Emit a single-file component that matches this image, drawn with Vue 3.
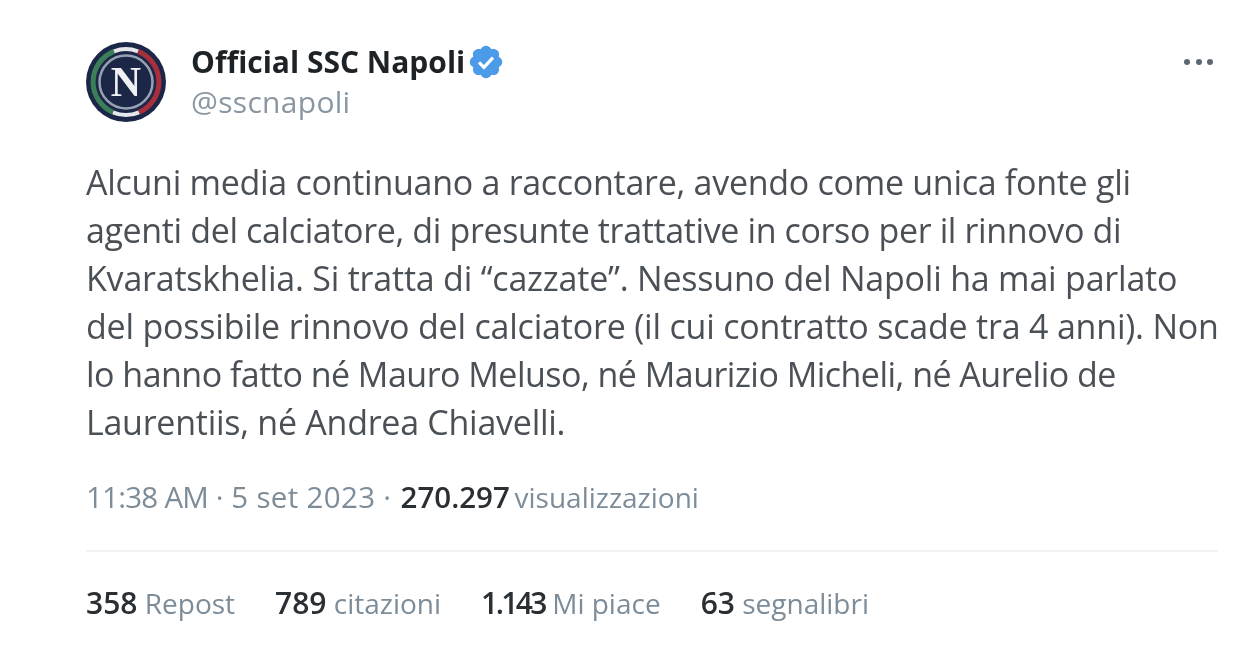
<script setup>
const righe = [
  { testo: 'Alcuni media continuano a raccontare, avendo come unica fonte gli', ls: -0.28 },
  { testo: 'agenti del calciatore, di presunte trattative in corso per il rinnovo di', ls: -0.37 },
  { testo: 'Kvaratskhelia. Si tratta di “cazzate”. Nessuno del Napoli ha mai parlato', ls: -0.21 },
  { testo: 'del possibile rinnovo del calciatore (il cui contratto scade tra 4 anni). Non', ls: -0.2 },
  { testo: 'lo hanno fatto né Mauro Meluso, né Maurizio Micheli, né Aurelio de', ls: -0.52 },
  { testo: 'Laurentiis, né Andrea Chiavelli.', ls: -0.26 }
]

const statistiche = [
  { num: '358', label: 'Repost' },
  { num: '789', label: 'citazioni' },
  { num: '1.143', label: 'Mi piace', stretto: true },
  { num: '63', label: 'segnalibri' }
]
</script>

<template>
  <div class="tweet">
    <header class="testa">
      <svg class="avatar" viewBox="0 0 80 80" width="80" height="80">
        <circle cx="40" cy="40" r="40" fill="#1c2747" />
        <path d="M28 9.3 A33 33 0 0 0 27 70.3" fill="none" stroke="#3a7f58" stroke-width="5" />
        <path d="M52 9.3 A33 33 0 0 1 53 70.3" fill="none" stroke="#a82f3c" stroke-width="5" />
        <path d="M28 9.3 A33 33 0 0 1 52 9.3" fill="none" stroke="#e6e8ec" stroke-width="4" />
        <path d="M27 70.3 A33 33 0 0 0 53 70.3" fill="none" stroke="#e6e8ec" stroke-width="4" />
        <circle cx="40" cy="40" r="26.5" fill="none" stroke="#98a1b2" stroke-width="2.5" />
        <text x="40" y="54" text-anchor="middle" class="logo-n">N</text>
      </svg>
      <div class="nomi">
        <div class="riga-nome">
          <span class="nome">Official SSC Napoli</span>
          <svg class="spunta" viewBox="0 0 24 24" width="38" height="38">
            <path fill="#4c9be8" d="M22.25 12c0-1.43-.88-2.67-2.19-3.34.46-1.39.2-2.9-.81-3.91s-2.52-1.27-3.91-.81c-.66-1.31-1.91-2.19-3.34-2.19s-2.67.88-3.33 2.19c-1.4-.46-2.91-.2-3.92.81s-1.26 2.52-.8 3.91c-1.31.67-2.2 1.91-2.2 3.34s.89 2.67 2.2 3.34c-.46 1.39-.21 2.9.8 3.91s2.52 1.26 3.91.81c.67 1.31 1.91 2.19 3.34 2.19s2.68-.88 3.34-2.19c1.39.45 2.9.2 3.91-.81s1.27-2.52.81-3.91c1.31-.67 2.19-1.91 2.19-3.34z" />
            <path fill="none" stroke="#fff" stroke-width="2" d="M7.6 12.3l3.1 3.1 5.7-6.2" />
          </svg>
        </div>
        <div class="handle">@sscnapoli</div>
      </div>
      <div class="altro">
        <i></i><i></i><i></i>
      </div>
    </header>

    <div class="testo">
      <div
        v-for="riga in righe"
        :key="riga.testo"
        class="riga"
        :style="{ letterSpacing: riga.ls + 'px' }">{{ riga.testo }}</div>
    </div>

    <div class="meta">
      <span class="ora">11:38 AM</span> · <span class="data">5 set 2023</span> · <b>270.297</b> <span class="vis">visualizzazioni</span>
    </div>

    <div class="stats">
      <span v-for="s in statistiche" :key="s.label" class="stat"><b :class="{ stretto: s.stretto }">{{ s.num }}</b> {{ s.label }}</span>
    </div>
  </div>
</template>

<style>
html, body {
  margin: 0;
  background: #fff;
}
</style>

<style scoped>
/* lo screenshot originale e' ingrandito, quindi leggermente sfocato */
.tweet {
  width: 1132px;
  height: 658px;
  box-sizing: border-box;
  margin-left: 86px;
  padding-top: 42px;
  font-family: "Open Sans", "Noto Sans", sans-serif;
  color: #0f1419;
  overflow: hidden;
  filter: blur(0.5px);
}

.testa {
  display: flex;
  height: 80px;
}

.avatar {
  flex: none;
}

.logo-n {
  font-family: "Liberation Serif", serif;
  font-weight: 700;
  font-size: 42px;
  fill: #eef0f4;
}

.nomi {
  margin-left: 25px;
  flex: 1;
}

.riga-nome {
  display: flex;
  align-items: center;
  height: 40px;
}

.nome {
  font-size: 30px;
  line-height: 40px;
  font-weight: 700;
  color: #1d2226;
  white-space: nowrap;
  margin-top: -1px;
}

.spunta {
  margin-left: 2px;
}

.handle {
  font-size: 30px;
  line-height: 40px;
  color: #8a97a3;
  letter-spacing: 0.3px;
}

.altro {
  display: flex;
  gap: 5.5px;
  height: 6px;
  margin-top: 17px;
  margin-right: 5px;
}

.altro i {
  width: 6px;
  height: 6px;
  border-radius: 50%;
  background: #5b6873;
}

.testo {
  margin-top: 36px;
  font-size: 34px;
  line-height: 48px;
  color: #4a5056;
  white-space: nowrap;
}

.meta {
  margin-top: 31px;
  font-size: 29.5px;
  line-height: 40px;
  color: #7d8c99;
  white-space: nowrap;
}

.ora {
  letter-spacing: -0.75px;
}

.data {
  letter-spacing: 0.35px;
}

.meta b {
  color: #2a2f34;
  font-weight: 600;
  margin-left: 2px;
}

.vis {
  font-size: 28px;
  margin-left: -3px;
}

.stats {
  margin-top: 33px;
  border-top: 2px solid #eff3f4;
  padding-top: 31px;
  display: flex;
  gap: 40px;
  font-size: 28px;
  line-height: 40px;
  color: #7d8c99;
}

.stat b {
  color: #2a2f34;
  font-weight: 600;
  font-size: 30px;
}

.stat b.stretto {
  letter-spacing: -2.6px;
}
</style>
